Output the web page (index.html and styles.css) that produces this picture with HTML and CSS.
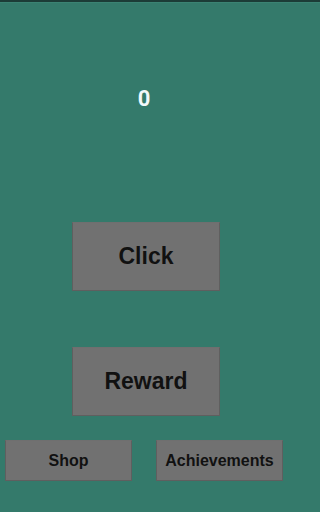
FILE: index.html
```html
<!DOCTYPE html>
<html>
<head>
<meta charset="utf-8">
<link rel="stylesheet" href="styles.css">
</head>
<body>
<div class="app">
  <div class="topbar"></div>
  <div class="counter">0</div>
  <button class="btn big click">Click</button>
  <button class="btn big reward">Reward</button>
  <div class="row">
    <button class="btn small">Shop</button>
    <button class="btn small">Achievements</button>
  </div>
</div>
</body>
</html>
```
FILE: styles.css
```css
html, body {
  margin: 0;
  padding: 0;
  background: #347a6b;
}
.app {
  width: 100%;
  min-width: 288px;
  height: 512px;
  display: flex;
  flex-direction: column;
  align-items: flex-start;
  background: #347a6b;
  font-family: "Liberation Sans", Arial, sans-serif;
}
.topbar {
  align-self: stretch;
  height: 2px;
  background: #1c3c37;
  border-bottom: 1px solid #3b8373;
}
.counter {
  width: 288px;
  margin-top: 83px;
  height: 26px;
  line-height: 26px;
  text-align: center;
  font-family: Roboto, "Liberation Sans", sans-serif;
  font-weight: bold;
  font-size: 22px;
  color: #f2f8fa;
}
.btn {
  box-sizing: border-box;
  background: #717171;
  color: #111;
  font-family: "Liberation Sans", Arial, sans-serif;
  font-weight: bold;
  border: 1px solid #5f5f5f;
  border-top-color: #6f6f6f;
  padding: 0;
  margin: 0;
}
.big {
  width: 148px;
  height: 69px;
  font-size: 23px;
  margin-left: 72px;
}
.click {
  margin-top: 110px;
}
.reward {
  margin-top: 56px;
}
.row {
  display: flex;
  gap: 24px;
  margin-top: 24px;
  padding-left: 5px;
}
.small {
  width: 127px;
  height: 41px;
  font-size: 16px;
}
```
